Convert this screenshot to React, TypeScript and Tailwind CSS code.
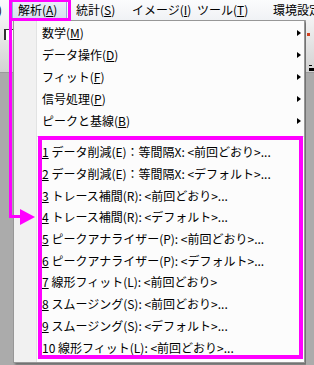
import React from "react";

const topItems: [string, string][] = [
  ["数学", "M"],
  ["データ操作", "D"],
  ["フィット", "F"],
  ["信号処理", "P"],
  ["ピークと基線", "B"],
];

const recent: string[] = [
  "データ削減(E)：等間隔X: <前回どおり>...",
  "データ削減(E)：等間隔X: <デフォルト>...",
  "トレース補間(R): <前回どおり>...",
  "トレース補間(R): <デフォルト>...",
  "ピークアナライザー(P): <前回どおり>...",
  "ピークアナライザー(P): <デフォルト>...",
  "線形フィット(L): <前回どおり>",
  "スムージング(S): <前回どおり>...",
  "スムージング(S): <デフォルト>...",
  "線形フィット(L): <前回どおり>...",
];

function Arrow() {
  return (
    <span className="w-0 h-0 border-y-[3.5px] border-y-transparent border-l-[4px] border-l-black" />
  );
}

export default function App() {
  return (
    <div className="relative w-[314px] h-[365px] overflow-hidden bg-[#ababab] font-['Noto_Sans_CJK_JP',sans-serif] text-[12px] text-black">
      {/* Menu bar */}
      <div className="flex h-[20px] items-center bg-gradient-to-b from-[#fbfcfd] to-[#f0f2f5] leading-[20px] whitespace-nowrap overflow-hidden">
        <div className="w-[12px] shrink-0 h-full overflow-hidden">
          <span className="block -ml-[2px]">)</span>
        </div>
        <div className="w-[55px] shrink-0 h-[18px] flex items-center pl-[5px] bg-gradient-to-b from-[#e8eef7] to-[#d6e1ef] border border-[#8fb0d8]">
          解析(<u className="underline-offset-[1px]">A</u>)
        </div>
        <div className="w-[59px] shrink-0 pl-[9px]">
          統計(<u className="underline-offset-[1px]">S</u>)
        </div>
        <div className="w-[65px] shrink-0 pl-[6px]">
          イメージ(<u className="underline-offset-[1px]">I</u>)
        </div>
        <div className="w-[75px] shrink-0 pl-[6px]">
          ツール(<u className="underline-offset-[1px]">T</u>)
        </div>
        <div className="shrink-0 pl-[7px]">環境設定</div>
      </div>

      <div className="flex h-[345px]">
        {/* Left strip */}
        <div className="w-[13px] shrink-0 flex flex-col">
          <div className="h-[53px] bg-gradient-to-b from-[#f2f2f2] to-[#d2d2d2] border-b border-[#9a9a9a] relative">
            <div className="absolute left-[4px] top-[9px] w-[9px] h-[11px] bg-white border-l-2 border-t border-[#333]" />
          </div>
          <div className="flex-1 bg-[#ababab]" />
        </div>

        {/* Menu */}
        <div className="w-[292px] shrink-0 h-[343px] border border-[#979797] bg-[#fcfcfc] flex shadow-[2px_2px_2px_rgba(0,0,0,0.35)]">
          <div className="w-[23px] bg-[#f1f1f1] border-r border-[#e2e3e3]" />
          <div className="flex-1 flex flex-col pt-[1px] whitespace-nowrap">
            {topItems.map(([label, key]) => (
              <div key={key} className="h-[22px] flex items-center justify-between pl-[5px] pr-[3px] leading-[22px]">
                <span>
                  {label}(<u className="underline-offset-[1px]">{key}</u>)
                </span>
                <Arrow />
              </div>
            ))}
            <div className="h-[9px] flex items-center">
              <div className="w-full h-[1px] bg-[#e2e3e3]" />
            </div>
            {recent.map((t, i) => (
              <div key={i} className="h-[21.7px] flex items-center pl-[5px] leading-[21px]">
                <span>
                  {i < 9 ? (
                    <u className="underline-offset-[1px]">{i + 1}</u>
                  ) : (
                    <span>10</span>
                  )}{" "}
                  {t}
                </span>
              </div>
            ))}
          </div>
        </div>

        {/* Right strip */}
        <div className="flex-1 flex flex-col ml-[1px]">
          <div className="h-[53px] bg-gradient-to-b from-[#f2f2f2] to-[#d2d2d2] border-b border-[#9a9a9a] relative">
            <div className="absolute left-[1px] top-[13px] w-[3px] h-[3px] bg-[#d04020]" />
            <div className="absolute left-[3px] top-[45px] w-[3px] h-[1px] bg-black" />
            <div className="absolute left-[3px] top-[48px] w-[5px] h-[3px] bg-black" />
          </div>
          <div className="flex-1 bg-[#ababab]" />
        </div>
      </div>

      {/* Annotations */}
      <div className="absolute left-[9px] top-[-1px] w-[62px] h-[22px] border-[3px] border-[#ff00ff]" />
      <div className="absolute left-[9px] top-[21px] w-[3px] h-[197px] bg-[#ff00ff]" />
      <div className="absolute left-[9px] top-[215px] w-[13px] h-[3px] bg-[#ff00ff]" />
      <svg className="absolute left-[20px] top-[209px]" width="16" height="16" viewBox="0 0 16 16">
        <polygon points="0,0 15,8 0,16" fill="#ff00ff" />
      </svg>
      <div className="absolute left-[38px] top-[136px] w-[265px] h-[223px] border-[4px] border-[#ff00ff]" />
    </div>
  );
}
